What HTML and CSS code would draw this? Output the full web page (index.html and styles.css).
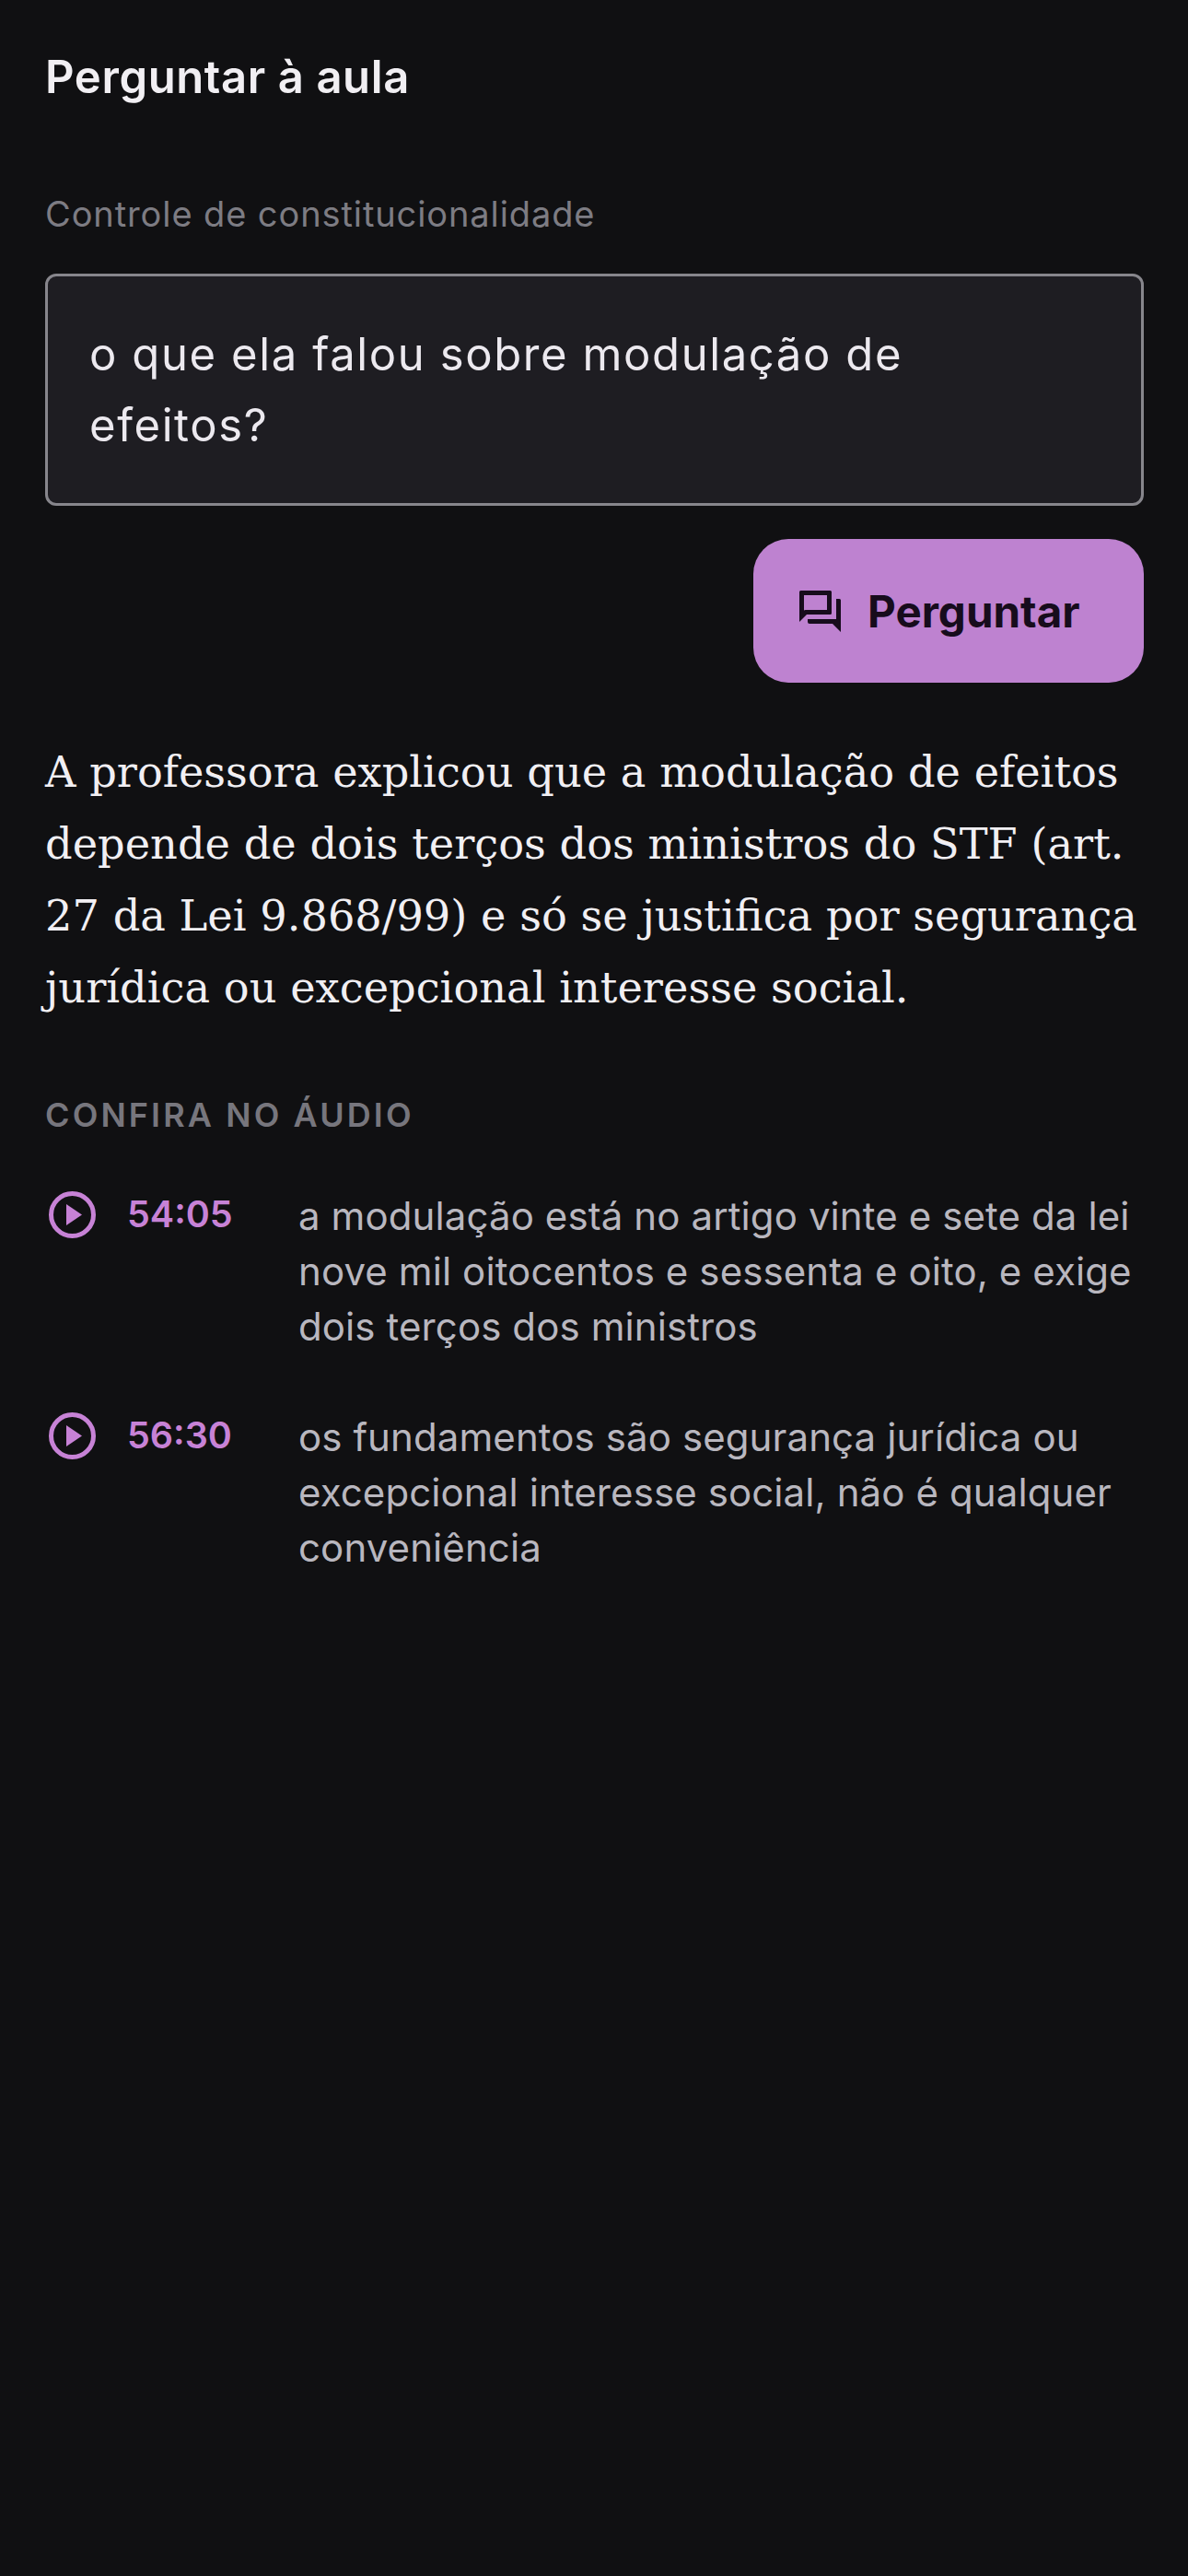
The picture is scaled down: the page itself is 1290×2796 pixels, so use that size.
FILE: index.html
```html
<!DOCTYPE html>
<html lang="pt-BR">
<head>
  <meta charset="UTF-8" />
  <meta name="viewport" content="width=device-width, initial-scale=1" />
  <title>Perguntar à aula</title>
  <link rel="stylesheet" href="styles.css">
</head>
<body>
  <div class="screen">
    <h1 class="page-title">Perguntar à aula</h1>
    <p class="lesson-name">Controle de constitucionalidade</p>

    <div class="question-box">o que ela falou sobre modulação de efeitos?</div>

    <div class="actions">
      <button class="ask-btn" type="button">
        <svg class="ask-icon" viewBox="0 0 45 45" fill="currentColor" fill-rule="evenodd">
          <path d="M0 34V1.500Q0 0 1.500 0H33.500Q35 0 35 1.500V24.500Q35 26 33.500 26H8ZM5 5V21.500L6.500 21H30V5Z" />
          <path d="M40 9H43.500Q45 9 45 10.500V45L36 36H11Q9 36 9 34V31H40Z" />
        </svg>
        <span>Perguntar</span>
      </button>
    </div>

    <p class="answer">A professora explicou que a modulação de efeitos depende de dois terços dos ministros do STF (art. 27 da Lei 9.868/99) e só se justifica por segurança jurídica ou excepcional interesse social.</p>

    <h2 class="section-label">CONFIRA NO ÁUDIO</h2>

    <ul class="clips">
      <li class="clip">
        <svg class="play-icon" viewBox="0 0 51 51">
          <circle cx="25.500" cy="25.500" r="23" fill="none" stroke="currentColor" stroke-width="5" />
          <path d="M19 14 36 25.500 19 37z" fill="currentColor" />
        </svg>
        <span class="clip-time">54:05</span>
        <span class="clip-text">a modulação está no artigo vinte e sete da lei nove mil oitocentos e sessenta e oito, e exige dois terços dos ministros</span>
      </li>
      <li class="clip">
        <svg class="play-icon" viewBox="0 0 51 51">
          <circle cx="25.500" cy="25.500" r="23" fill="none" stroke="currentColor" stroke-width="5" />
          <path d="M19 14 36 25.500 19 37z" fill="currentColor" />
        </svg>
        <span class="clip-time">56:30</span>
        <span class="clip-text">os fundamentos são segurança jurídica ou excepcional interesse social, não é qualquer conveniência</span>
      </li>
    </ul>
  </div>
</body>
</html>
```

FILE: styles.css
```css
* {
  box-sizing: border-box;
}

body {
  margin: 0;
  background-color: #101012;
  font-family: 'Inter', 'Noto Sans', sans-serif;
}

.screen {
  min-height: 2796px;
  padding: 52px 48px 0 49px;
}

.page-title {
  margin: 0;
  font-size: 49px;
  line-height: 64px;
  font-weight: 600;
  letter-spacing: 0.6px;
  color: #f1eff3;
}

.lesson-name {
  margin: 91px 0 0;
  font-size: 38px;
  line-height: 50px;
  color: #7d7c83;
  letter-spacing: 0.9px;
}

.question-box {
  margin-top: 40px;
  height: 252px;
  padding: 46px 130px 0 45px;
  background-color: #1e1d22;
  border: 3px solid #87868c;
  border-radius: 12px;
  font-size: 49px;
  line-height: 77px;
  letter-spacing: 1.6px;
  color: #ece9ef;
}

.actions {
  display: flex;
  justify-content: flex-end;
  margin-top: 36px;
}

.ask-btn {
  display: flex;
  align-items: center;
  gap: 29px;
  width: 424px;
  height: 156px;
  padding: 0 0 0 50px;
  border: none;
  border-radius: 38px;
  background-color: #be82d0;
  color: #170c1c;
  font-family: inherit;
  font-size: 47.5px;
  font-weight: 700;
}

.ask-icon {
  width: 45px;
  height: 45px;
  flex-shrink: 0;
}

.answer {
  margin: 58px 0 0;
  font-family: 'DejaVu Serif', serif;
  font-size: 46.3px;
  line-height: 78px;
  color: #f1eff3;
}

.section-label {
  margin: 76px 0 0;
  font-size: 36px;
  line-height: 46px;
  font-weight: 600;
  letter-spacing: 3.1px;
  color: #77767d;
}

.clips {
  list-style: none;
  margin: 57px 0 0;
  padding: 0;
}

.clip {
  display: flex;
  align-items: flex-start;
  margin-bottom: 60px;
}

.play-icon {
  width: 51px;
  height: 51px;
  flex-shrink: 0;
  margin: 3px 0 0 4px;
  color: #c782d6;
}

.clip-time {
  width: 220px;
  flex-shrink: 0;
  padding: 2px 0 0 34px;
  font-size: 39.5px;
  line-height: 52px;
  font-weight: 600;
  color: #c782d6;
}

.clip-text {
  font-size: 42px;
  line-height: 60px;
  letter-spacing: 0.1px;
  color: #b9b7bf;
}
```
